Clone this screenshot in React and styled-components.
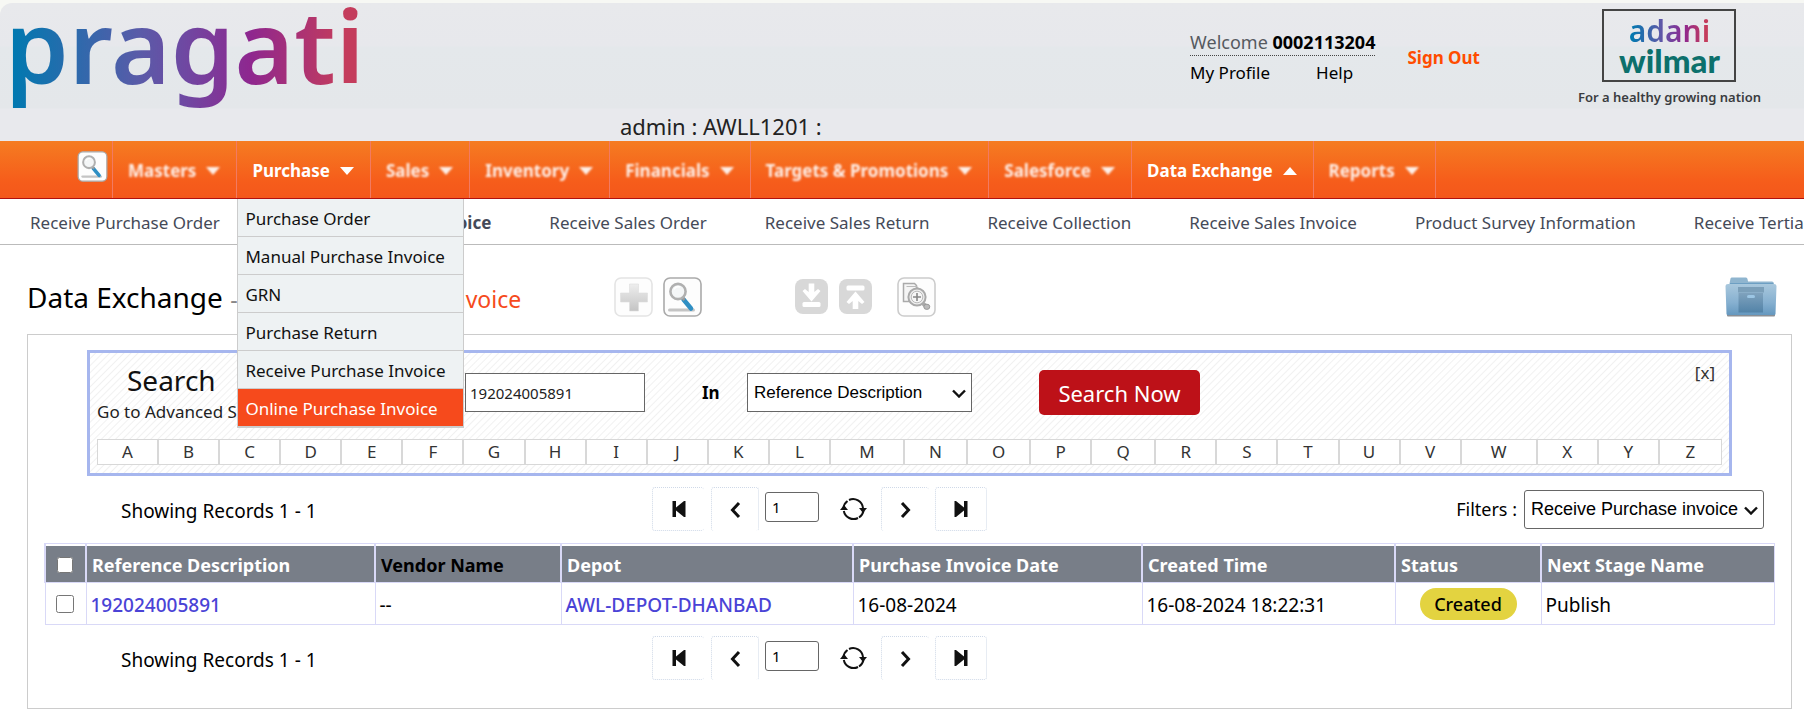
import React from "react";
import styled, { createGlobalStyle, css } from "styled-components";

const GlobalStyle = createGlobalStyle`
  *, *::before, *::after { box-sizing: border-box; }
  body {
    margin: 0;
    background: #fff;
    color: #000;
    font-family: "Noto Sans", "Open Sans", sans-serif;
    font-size: 17px;
    overflow-x: hidden;
  }
  a { color: inherit; text-decoration: none; }
  button, input, select { font-family: inherit; }
`;

const brandGradient = css`
  background-image: linear-gradient(90deg, #0079b0 2%, #5b5aa8 38%, #6f48a2 50%, #8e278f 68%, #c43c5c 94%);
  background-clip: text;
  -webkit-background-clip: text;
  color: transparent;
`;

const Page = styled.div`
  background: #f7f8f4;
  padding-top: 3px;
`;

const Header = styled.header`
  border-top-left-radius: 12px;
  background: linear-gradient(#e8e9ec 0, #e7e8ec 43px, #e4e8eb 44px, #e4e7ea 105px, #e8e9ed 106px);
`;

const HeaderTop = styled.div`
  display: flex;
  height: 108px;
  padding: 0 43px 0 5px;
`;

const Logo = styled.a`
  ${brandGradient}
  display: block;
  margin-right: auto;
  padding: 1px 0 26px;
  font-size: 102px;
  line-height: 81px;
  font-weight: 600;
`;

const UserBox = styled.div`
  padding-top: 26px;
  font-size: 17px;
  white-space: nowrap;
`;

const Welcome = styled.div`
  border-bottom: 1px dotted #444;
  font-size: 18px;
  line-height: 26px;
  color: #555a60;
  strong { color: #000; font-weight: 700; }
`;

const UserLinks = styled.div`
  display: flex;
  gap: 46px;
  padding-top: 4px;
  line-height: 25px;
`;

const SignOut = styled.a`
  margin: 42px 98px 0 32px;
  color: #ff4d00;
  font-weight: 700;
  line-height: 26px;
  white-space: nowrap;
`;

const Company = styled.div`
  display: flex;
  flex-direction: column;
  align-items: center;
  padding-top: 6px;
`;

const CompanyMark = styled.div`
  width: 134px;
  height: 73px;
  padding-top: 4px;
  border: 2px solid #444;
  text-align: center;
`;

const Adani = styled.div`
  ${brandGradient}
  width: max-content;
  margin: 0 auto;
  font-size: 30px;
  font-weight: 600;
  line-height: 32px;
`;

const Wilmar = styled.div`
  color: #0c706c;
  font-family: Lato, sans-serif;
  font-size: 33px;
  font-weight: 900;
  line-height: 26px;
`;

const Tagline = styled.div`
  margin-top: 4px;
  color: #3a3c40;
  font-size: 13px;
  font-weight: 600;
  line-height: 22px;
  white-space: nowrap;
`;

const Session = styled.div`
  padding-left: 620px;
  color: #222;
  font-size: 22px;
  line-height: 30px;
`;

const Nav = styled.nav`
  display: flex;
  height: 58px;
  padding-left: 77px;
  border-bottom: 1px solid #b01010;
  background: linear-gradient(#f57c21, #f65d1b 70%, #f4571b);
`;

const NavSearch = styled.button`
  width: 31px;
  height: 31px;
  margin: 10px 4px 0 0;
  padding: 0;
  border: 0;
  background: none;
`;

const NavItem = styled.div`
  position: relative;
  border-left: 1px solid #f27a62;
  &:last-child { border-right: 1px solid #f27a62; }
`;

const NavButton = styled.button`
  display: flex;
  align-items: center;
  gap: 10px;
  height: 57px;
  padding: 2px 16px 0 15px;
  border: 0;
  background: none;
  color: #fff;
  font-size: 17px;
  font-weight: 700;
  white-space: nowrap;
  filter: ${(p) => (p.$faded ? "blur(1px)" : "none")};
  opacity: ${(p) => (p.$faded ? 0.9 : 1)};
`;

const Arrow = styled.span`
  border: 7px solid transparent;
  border-width: ${(p) => (p.$up ? "0 7px 8px" : "8px 7px 0")};
  border-color: ${(p) => (p.$up ? "transparent transparent #fff" : "#fff transparent transparent")};
`;

const Menu = styled.ul`
  position: absolute;
  z-index: 2;
  top: 58px;
  left: 0;
  width: 227px;
  margin: 0;
  padding: 0;
  border: 1px solid #ccc;
  border-top: 0;
  list-style: none;
`;

const MenuLink = styled.a`
  display: block;
  padding: 2px 0 0 7px;
  border-bottom: 1px solid #ccc;
  background: ${(p) => (p.$active ? "#f64a1c" : "#eef2f3")};
  color: ${(p) => (p.$active ? "#fff" : "#111")};
  line-height: 35px;
  white-space: nowrap;
`;

const SubNav = styled.nav`
  display: flex;
  gap: 58px;
  padding-left: 30px;
  border-bottom: 1px solid #bbb;
  background: #fff;
  overflow: hidden;
`;

const SubLink = styled.a`
  padding-top: 2px;
  color: #454a58;
  font-weight: ${(p) => (p.$active ? 700 : 400)};
  line-height: 43px;
  white-space: nowrap;
`;

const Main = styled.main`
  padding: 0 12px 2px 27px;
  background: #fff;
`;

const TitleRow = styled.div`
  display: flex;
  align-items: center;
  padding: 32px 15px 17px 0;
`;

const Title = styled.h1`
  flex: 0 0 587px;
  margin: 0;
  font-size: 28px;
  font-weight: 400;
  line-height: 40px;
  white-space: nowrap;
  small { font-size: 23px; line-height: 1; color: #f64a1c; }
  i { margin-right: 7px; color: #888; font-style: normal; }
`;

const ToolButton = styled.button`
  width: ${(p) => p.$w || 39}px;
  height: 40px;
  margin-right: ${(p) => p.$gap || 0}px;
  padding: 0;
  border: 0;
  background: none;
  svg { display: block; }
`;

const FolderButton = styled(ToolButton)`
  margin-left: auto;
`;

const Panel = styled.section`
  padding: 15px 0 28px;
  border: 1px solid #ccc;
`;

const SearchBox = styled.form`
  margin: 0 59px;
  padding: 0 7px 8px;
  border: 3px solid #a6b6ee;
  background: repeating-linear-gradient(135deg, #fff 0, #fff 3px, #f1f1f1 4px, #fff 5px);
`;

const SearchRow = styled.div`
  display: flex;
  height: 86px;
`;

const SearchIntro = styled.div`
  flex: 0 0 368px;
  padding-top: 9px;
  color: #222;
  line-height: 28px;
  h2 { margin: 0 0 0 30px; color: #111; font-size: 28px; font-weight: 400; line-height: 36px; }
`;

const Controls = styled.div`
  display: flex;
  align-items: center;
  height: 45px;
  margin-top: 17px;
`;

const Keyword = styled.input`
  width: 180px;
  height: 39px;
  padding: 1px 4px;
  border: 1px solid #666;
  background: #fff;
  color: #222;
  font-size: 15px;
`;

const InLabel = styled.label`
  width: 102px;
  padding-left: 57px;
  font-weight: 700;
`;

const SelectBox = styled.div`
  position: relative;
  height: 39px;
  svg {
    position: absolute;
    top: 16px;
    right: 6px;
    pointer-events: none;
  }
`;

const Select = styled.select`
  appearance: none;
  width: ${(p) => p.$w}px;
  height: 39px;
  padding: 0 6px;
  border: 1px solid #666;
  border-radius: ${(p) => p.$round || 0}px;
  background-color: #fff;
  color: #000;
  font-family: "Liberation Sans", Arial, sans-serif;
  font-size: ${(p) => p.$size}px;
`;

const SearchNow = styled.button`
  width: 161px;
  height: 45px;
  margin-left: 67px;
  border: 0;
  border-radius: 5px;
  background: #bd1118;
  color: #fff;
  font-size: 22px;
`;

const Close = styled.button`
  height: 22px;
  margin: 9px 7px 0 auto;
  padding: 0;
  border: 0;
  background: none;
  color: #333;
  font-size: 17px;
  line-height: 22px;
`;

const Alphabet = styled.div`
  display: grid;
  grid-template-columns: repeat(12, 61fr) 74fr 63fr 63fr 61fr 64fr repeat(5, 61fr) 76fr repeat(3, 61fr);
  border: 1px solid #d8d8d8;
  background: #fff;
  a {
    border-right: 2px solid #d8d8d8;
    color: #333;
    line-height: 24px;
    text-align: center;
  }
  a:last-child { border-right: 0; }
`;

const RecordsRow = styled.div`
  display: flex;
  align-items: center;
  padding: 11px 27px ${(p) => (p.$last ? 0 : 12)}px 93px;
`;

const Count = styled.div`
  flex: 0 0 531px;
  padding-top: 4px;
  font-size: 19px;
  line-height: 24px;
`;

const Pager = styled.div`
  display: flex;
  height: 44px;
`;

const PageButton = styled.button`
  display: flex;
  align-items: center;
  justify-content: center;
  width: ${(p) => p.$w}px;
  margin-left: ${(p) => p.$gap || 0}px;
  padding: 0;
  border: 0 dotted #cfd9e8;
  border-width: ${(p) => p.$edges};
  border-radius: 3px;
  background: none;
`;

const PageInput = styled.input`
  width: 54px;
  height: 30px;
  margin: 5px 0 0 6px;
  padding: 0 6px;
  border: 1px solid #666;
  border-radius: 3px;
  font-size: 15px;
`;

const Filters = styled.div`
  display: flex;
  align-items: center;
  gap: 7px;
  margin-left: auto;
  font-size: 18px;
`;

const Grid = styled.table`
  width: calc(100% - 32px);
  margin: 0 16px;
  border: 1px solid #d9d9f7;
  border-collapse: collapse;
  table-layout: fixed;
`;

const HeadCell = styled.th`
  height: 39px;
  padding: 4px 0 0 5px;
  border: 1px solid #d9d9f7;
  border-left-width: 2px;
  box-shadow: inset 0 2px #fff;
  background: #787e88;
  color: ${(p) => (p.$dark ? "#000" : "#fff")};
  font-size: 18px;
  font-weight: 700;
  line-height: 24px;
  text-align: left;
  white-space: nowrap;
`;

const Cell = styled.td`
  height: 42px;
  padding: ${(p) => (p.$center ? "0" : "2px 0 0 4px")};
  border: 1px solid #d9d9f7;
  text-align: ${(p) => (p.$center ? "center" : "left")};
  white-space: nowrap;
  font-size: ${(p) => (p.$center ? 18 : 19)}px;
  line-height: 26px;
  a { color: #4a43d6; font-weight: 500; }
`;

const Tick = styled.input`
  width: ${(p) => p.$size}px;
  height: ${(p) => p.$size}px;
  margin: 0 0 4px 6px;
  vertical-align: middle;
`;

const Badge = styled.span`
  display: inline-block;
  width: 97px;
  border-radius: 16px;
  background: #e3d340;
  font-weight: 500;
  line-height: 32px;
`;

const Magnifier = ({ size, height = size }) => (
  <svg width={size} height={height} viewBox="0 0 39 40" aria-hidden="true">
    <rect x="1" y="1" width="37" height="38" rx="6" fill="#fdfdfd" stroke="#aaa" strokeWidth="1.6" />
    <rect x="5" y="31.500" width="27" height="3" rx="1.500" fill="#c4c4c4" />
    <path d="M20.500 22.500l7.500 9" stroke="#2f8fc4" strokeWidth="4.600" strokeLinecap="round" />
    <path d="M18.500 19.500l3 3.500" stroke="#999" strokeWidth="3" />
    <circle cx="15" cy="14.500" r="7.600" fill="#f4f6f7" stroke="#b0b0b0" strokeWidth="2.600" />
    <path d="M11 12.500a5 5 0 0 1 6-2.500" stroke="#fff" strokeWidth="1.500" fill="none" />
  </svg>
);

const PlusIcon = () => (
  <svg width="39" height="40" viewBox="0 0 39 40" aria-hidden="true">
    <defs>
      <linearGradient id="plus" x2="0" y2="1"><stop stopColor="#eee" /><stop offset="1" stopColor="#c4c4c4" /></linearGradient>
    </defs>
    <rect x="1" y="1" width="37" height="38" rx="6" fill="#fdfdfd" stroke="#e4e4e4" strokeWidth="1.6" />
    <path d="M15.500 7h9v9h9v9h-9v9h-9v-9h-9v-9h9z" fill="url(#plus)" stroke="#ddd" strokeWidth=".6" />
  </svg>
);

const TransferIcon = ({ up }) => (
  <svg width="33" height="40" viewBox="0 0 33 40" aria-hidden="true">
    <rect y="2" width="33" height="35" rx="8" fill="#d8d8d8" />
    {up ? (
      <g fill="#fff"><rect x="7.500" y="8.500" width="18" height="5" rx="1.500" /><path d="M16.500 14.500L7.500 25l2.500 2 3.700-3v8h5.600v-8l3.700 3 2.500-2z" /></g>
    ) : (
      <g fill="#fff"><rect x="7.500" y="25" width="18" height="5" rx="1.500" /><path d="M16.500 24.500L7.500 14l2.500-2 3.700 3V6.500h5.600V15l3.700-3 2.500 2z" /></g>
    )}
  </svg>
);

const DetailIcon = () => (
  <svg width="39" height="40" viewBox="0 0 39 40" aria-hidden="true">
    <rect x="1" y="1" width="37" height="38" rx="6" fill="#fdfdfd" stroke="#ccc" strokeWidth="1.6" />
    <path d="M6.500 6.500h11l2 2v16h-13z" fill="#f5f5f5" stroke="#aaa" strokeWidth="1.500" />
    <path d="M9.500 9.500h10l2 2v13h-8" fill="none" stroke="#bbb" strokeWidth="1.200" />
    <path d="M26.500 27l3.500 3" stroke="#aaa" strokeWidth="4" strokeLinecap="round" />
    <ellipse cx="29.800" cy="29.800" rx="3" ry="2.600" fill="#bbb" stroke="#999" />
    <circle cx="20" cy="20" r="8.600" fill="#eee" stroke="#aaa" strokeWidth="2" />
    <circle cx="20" cy="20" r="5.800" fill="#f6f6f6" stroke="#bbb" />
    <path d="M20 16v8M16 20h8" stroke="#888" strokeWidth="1.600" />
  </svg>
);

const FolderIcon = () => (
  <svg width="52" height="40" viewBox="0 0 52 40" aria-hidden="true">
    <defs>
      <linearGradient id="folder" x2="0" y2="1"><stop stopColor="#a9c8dd" /><stop offset=".6" stopColor="#86b0d0" /><stop offset="1" stopColor="#6598bf" /></linearGradient>
      <linearGradient id="cabinet" x2="0" y2="1"><stop stopColor="#7fa2bd" /><stop offset="1" stopColor="#5283a8" /></linearGradient>
    </defs>
    <path d="M4 9L5.500 1.500Q5.700 .5 7 .5h14q1.200 0 1.500 1.500l.5 2.500h24q1.500 0 2 2V10H4z" fill="#8fb5cf" />
    <path d="M5 6h43v3H5z" fill="#6d9fc3" />
    <rect x="2" y="36" width="48" height="3.500" rx="1" fill="#8a8f95" />
    <path d="M.5 9Q.5 7 3 7h46q2.500 0 2.500 2L50.500 37q0 1-1.500 1H3q-1.500 0-1.500-1z" fill="url(#folder)" />
    <path d="M13 10h26v5.500H13z" fill="#7b9fb9" />
    <path d="M13.500 16h24.500v19.500H13.500z" fill="url(#cabinet)" />
    <rect x="22" y="18" width="8" height="3" rx="1.500" fill="#9cc6e4" />
  </svg>
);

const StepIcon = ({ flip }) => (
  <svg width="14" height="18" viewBox="0 0 14 18" aria-hidden="true">
    <g transform={flip ? "matrix(-1 0 0 1 14 0)" : undefined}>
      <path d="M0.500 1h3.500v6.500L12 1h1.500v16H12L4 10.500V17H.5z" fill="#111" />
    </g>
  </svg>
);

const ChevronIcon = ({ flip }) => (
  <svg width="12" height="18" viewBox="0 0 12 18" aria-hidden="true">
    <path d={flip ? "M2 2l6.500 7L2 16" : "M10 2L3.500 9l6.500 7"} fill="none" stroke="#111" strokeWidth="3" />
  </svg>
);

const RefreshIcon = () => (
  <svg width="27" height="24" viewBox="0 0 27 24" aria-hidden="true">
    <g fill="none" stroke="#111" strokeWidth="2">
      <path d="M3.500 11a10 10 0 0 1 4-7M9 3a10 10 0 0 1 14 8" />
      <path d="M23.500 14a10 10 0 0 1-4.500 6.500M18 21A10 10 0 0 1 3.800 14" />
    </g>
    <path d="M0 13l4-5 4 5z" fill="#111" />
    <path d="M19 11h8l-4 5z" fill="#111" />
  </svg>
);

const menuItems = [
  "Purchase Order", "Manual Purchase Invoice", "GRN",
  "Purchase Return", "Receive Purchase Invoice", "Online Purchase Invoice",
];

const navItems = [
  { label: "Masters", faded: true },
  { label: "Purchase", menu: menuItems },
  { label: "Sales", faded: true },
  { label: "Inventory", faded: true },
  { label: "Financials", faded: true },
  { label: "Targets & Promotions", faded: true },
  { label: "Salesforce", faded: true },
  { label: "Data Exchange", up: true },
  { label: "Reports", faded: true },
];

const subItems = [
  "Receive Purchase Order", "Receive Purchase Invoice", "Receive Sales Order",
  "Receive Sales Return", "Receive Collection", "Receive Sales Invoice",
  "Product Survey Information", "Receive Tertiary Sales",
];

const columns = [
  { label: "Reference Description", width: "289px" },
  { label: "Vendor Name", width: "186px", dark: true },
  { label: "Depot", width: "292px" },
  { label: "Purchase Invoice Date", width: "289px" },
  { label: "Created Time", width: "253px" },
  { label: "Status", width: "146px" },
  { label: "Next Stage Name", width: "auto" },
];

function Dropdown({ option, ...rest }) {
  return (
    <SelectBox>
      <Select {...rest}><option>{option}</option></Select>
      <svg width="14" height="9" viewBox="0 0 14 9" aria-hidden="true">
        <path d="M1 1.500l6 6 6-6" fill="none" stroke="#111" strokeWidth="2.400" />
      </svg>
    </SelectBox>
  );
}

function Records({ last, children }) {
  return (
    <RecordsRow $last={last}>
      <Count>Showing Records 1 - 1</Count>
      <Pager>
        <PageButton $w={52} $edges="1px 0 1px 1px" aria-label="First page"><StepIcon /></PageButton>
        <PageButton $w={48} $gap={7} $edges="1px 1px 0 1px" aria-label="Previous page"><ChevronIcon /></PageButton>
        <PageInput aria-label="Page" defaultValue="1" />
        <PageButton $w={27} $gap={21} $edges="0" aria-label="Refresh"><RefreshIcon /></PageButton>
        <PageButton $w={48} $gap={14} $edges="1px 0 0 1px" aria-label="Next page"><ChevronIcon flip /></PageButton>
        <PageButton $w={52} $gap={6} $edges="1px" aria-label="Last page"><StepIcon flip /></PageButton>
      </Pager>
      {children}
    </RecordsRow>
  );
}

export default function App() {
  return (
    <Page>
      <GlobalStyle />
      <Header>
        <HeaderTop>
          <Logo href="#">pragati</Logo>
          <UserBox>
            <Welcome>Welcome <strong>0002113204</strong></Welcome>
            <UserLinks><a href="#">My Profile</a><a href="#">Help</a></UserLinks>
          </UserBox>
          <SignOut href="#">Sign Out</SignOut>
          <Company>
            <CompanyMark>
              <Adani>adani</Adani>
              <Wilmar>wilmar</Wilmar>
            </CompanyMark>
            <Tagline>For a healthy growing nation</Tagline>
          </Company>
        </HeaderTop>
        <Session>admin : AWLL1201 :</Session>
      </Header>

      <Nav>
        <NavSearch aria-label="Search"><Magnifier size={31} /></NavSearch>
        {navItems.map((item) => (
          <NavItem key={item.label}>
            <NavButton $faded={item.faded}>
              {item.label}
              <Arrow $up={item.up} />
            </NavButton>
            {item.menu && (
              <Menu>
                {item.menu.map((entry, i) => (
                  <li key={entry}><MenuLink href="#" $active={i === 5}>{entry}</MenuLink></li>
                ))}
              </Menu>
            )}
          </NavItem>
        ))}
      </Nav>

      <SubNav>
        {subItems.map((label, i) => (
          <SubLink key={label} href="#" $active={i === 1}>{label}</SubLink>
        ))}
      </SubNav>

      <Main>
        <TitleRow>
          <Title>Data Exchange <small><i>-</i> Receive Purchase Invoice</small></Title>
          <ToolButton $gap={10} aria-label="Add"><PlusIcon /></ToolButton>
          <ToolButton $gap={93} aria-label="Search"><Magnifier size={39} height={40} /></ToolButton>
          <ToolButton $w={33} $gap={11} aria-label="Import"><TransferIcon /></ToolButton>
          <ToolButton $w={33} $gap={25} aria-label="Export"><TransferIcon up /></ToolButton>
          <ToolButton aria-label="Find duplicates"><DetailIcon /></ToolButton>
          <FolderButton $w={52} aria-label="Archive"><FolderIcon /></FolderButton>
        </TitleRow>

        <Panel>
          <SearchBox onSubmit={(e) => e.preventDefault()}>
            <SearchRow>
              <SearchIntro>
                <h2>Search</h2>
                <a href="#">Go to Advanced Search</a>
              </SearchIntro>
              <Controls>
                <Keyword aria-label="Search for" defaultValue="192024005891" />
                <InLabel htmlFor="field">In</InLabel>
                <Dropdown id="field" $w={225} $size={17} option="Reference Description" />
                <SearchNow>Search Now</SearchNow>
              </Controls>
              <Close type="button">[x]</Close>
            </SearchRow>
            <Alphabet>
              {"ABCDEFGHIJKLMNOPQRSTUVWXYZ".split("").map((letter) => (
                <a key={letter} href="#">{letter}</a>
              ))}
            </Alphabet>
          </SearchBox>

          <Records>
            <Filters>
              <label htmlFor="filter">Filters :</label>
              <Dropdown id="filter" $w={240} $size={18} $round={3} option="Receive Purchase invoice" />
            </Filters>
          </Records>

          <Grid>
            <colgroup>
              <col style={{ width: "41px" }} />
              {columns.map((c) => <col key={c.label} style={{ width: c.width }} />)}
            </colgroup>
            <thead>
              <tr>
                <HeadCell><Tick type="checkbox" $size={16} aria-label="Select all" /></HeadCell>
                {columns.map((c) => <HeadCell key={c.label} $dark={c.dark}>{c.label}</HeadCell>)}
              </tr>
            </thead>
            <tbody>
              <tr>
                <Cell><Tick type="checkbox" $size={18} aria-label="Select 192024005891" /></Cell>
                <Cell><a href="#">192024005891</a></Cell>
                <Cell>--</Cell>
                <Cell><a href="#">AWL-DEPOT-DHANBAD</a></Cell>
                <Cell>16-08-2024</Cell>
                <Cell>16-08-2024 18:22:31</Cell>
                <Cell $center><Badge>Created</Badge></Cell>
                <Cell>Publish</Cell>
              </tr>
            </tbody>
          </Grid>

          <Records last />
        </Panel>
      </Main>
    </Page>
  );
}
